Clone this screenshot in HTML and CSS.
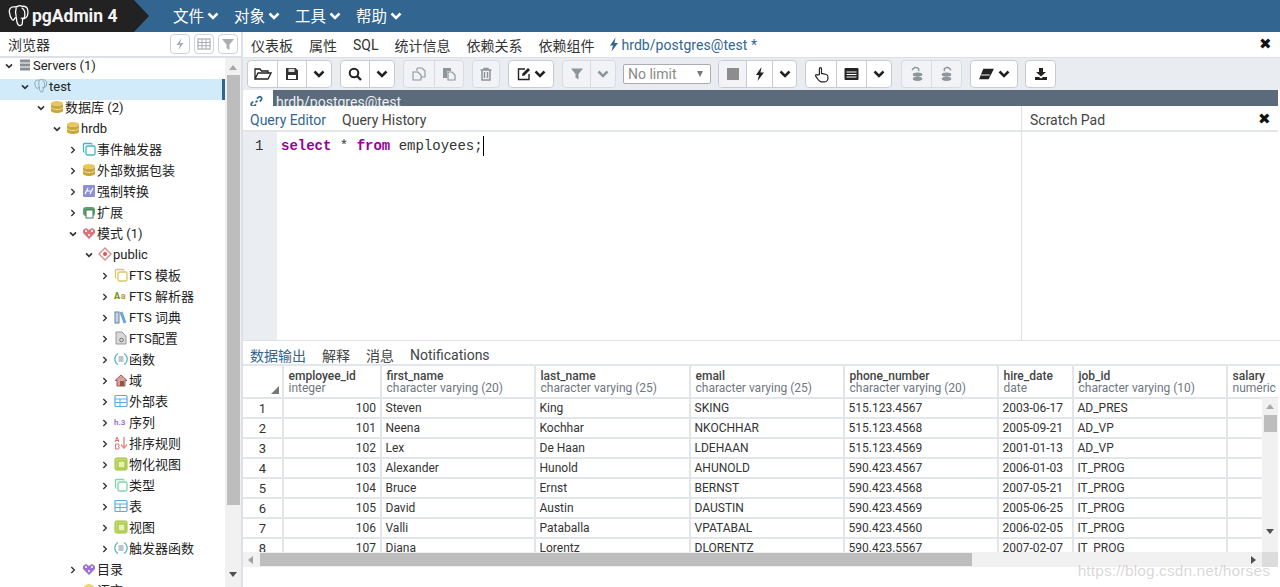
FILE: index.html
```html
<!DOCTYPE html>
<html lang="zh">
<head>
<meta charset="utf-8">
<title>pgAdmin 4</title>
<link rel="stylesheet" href="styles.css">
</head>
<body>
<svg class="sprite" aria-hidden="true">
  <symbol id="down" viewBox="0 0 12 8"><path d="M1.500 1.500 6 6l4.500-4.500" fill="none" stroke="currentColor" stroke-width="2.500"/></symbol>
  <symbol id="right" viewBox="0 0 8 12"><path d="M1.500 1.500 6 6l-4.500 4.500" fill="none" stroke="currentColor" stroke-width="2"/></symbol>
  <symbol id="pg" viewBox="0 0 24 24"><path d="M6 2C2.500 2 1 5 1.500 8c.4 3 1.500 6 3 8 1 1 2 .5 2.500-1 .5-1 1-1.500 2-1.500.3 3 .5 6 2 8 1.500 1.500 4 1 4.500-1 .3-2 .3-4 .5-5.500 2 0 4-1 5-3 .7-2 1-5 .5-7-.8-2.500-3-4-6-3.500-1.500-1-3.500-1-5 0C9.500 2.300 7.500 2 6 2Z M9 3c-1 3-1 7 0 10 M15 3c3 2 4 6 3 10-1 2-3 2-4 1" fill="none" stroke="currentColor" stroke-width="1.400"/></symbol>
  <symbol id="db" viewBox="0 0 14 14"><ellipse cx="7" cy="3.500" rx="6" ry="2.500" fill="#e8c65e"/><path d="M1 3.500v7c0 1.400 2.700 2.500 6 2.500s6-1.100 6-2.500v-7c0 1.400-2.700 2.500-6 2.500S1 4.900 1 3.500Z" fill="#c9a63c"/><path d="M1 7c0 1.400 2.700 2.500 6 2.500S13 8.400 13 7" fill="none" stroke="#f2e3a6" stroke-width="1"/></symbol>
  <symbol id="schema" viewBox="0 0 14 14"><path d="M7 13 1 7V4l3-2 3 2 3-2 3 2v3Z" fill="currentColor"/><path d="M3 5h2M9 5h2M6 9h2" stroke="#fff" stroke-width="1.500"/></symbol>
  <symbol id="stack" viewBox="0 0 14 14"><rect x="4" y="4" width="9" height="9" rx="1.500" fill="#fff" stroke="currentColor" stroke-width="1.300"/><path d="M10 2.500A1 1 0 0 0 9 1.500H2.500a1 1 0 0 0-1 1V9a1 1 0 0 0 1 1" fill="none" stroke="currentColor" stroke-width="1.300"/></symbol>
  <symbol id="func" viewBox="0 0 14 14"><path d="M4 1.500C1.500 3 .8 5 .8 7s.7 4 3.200 5.500M10 1.500c2.500 1.500 3.200 3.500 3.200 5.500s-.7 4-3.200 5.500" fill="none" stroke="currentColor" stroke-width="1.300"/><path d="M4.500 5h5M4.500 7h5M4.500 9h5" stroke="#7a8a9a" stroke-width="1"/></symbol>
  <symbol id="grid" viewBox="0 0 14 14"><rect x="1" y="1.500" width="12" height="11" rx="1" fill="#fff" stroke="currentColor" stroke-width="1.200"/><path d="M1 5h12M1 8.500h12M6 5v7.500" stroke="currentColor" stroke-width="1"/></symbol>
  <symbol id="view" viewBox="0 0 14 14"><rect x="1" y="1" width="12" height="12" rx="1.500" fill="#c3dc6a" stroke="#9cbd38"/><rect x="4" y="4" width="7" height="7" fill="#e5f0b5" stroke="#9cbd38"/></symbol>
</svg>

<header class="nav">
  <div class="brand">
    <svg class="brand-icon"><use href="#pg"/></svg>
    <span class="brand-text">pgAdmin 4</span>
  </div>
  <nav class="menu">
    <span class="menu-item">文件<svg class="menu-caret"><use href="#down"/></svg></span>
    <span class="menu-item">对象<svg class="menu-caret"><use href="#down"/></svg></span>
    <span class="menu-item">工具<svg class="menu-caret"><use href="#down"/></svg></span>
    <span class="menu-item">帮助<svg class="menu-caret"><use href="#down"/></svg></span>
  </nav>
</header>

<main class="main">
  <aside class="browser">
    <div class="browser-head">
      <span class="browser-title">浏览器</span>
      <div class="browser-tools">
        <span class="mini-btn"><svg viewBox="0 0 14 14" class="ic14"><path d="M8.500 1 3.500 8H7l-1.500 5 5-7H7Z" fill="#a8aeb5"/></svg></span>
        <span class="mini-btn"><svg viewBox="0 0 14 14" class="ic14"><rect x="1" y="2" width="12" height="10" fill="none" stroke="#a8aeb5" stroke-width="1.200"/><path d="M1 5.500h12M1 8.700h12M5 2v10M9 2v10" stroke="#a8aeb5"/></svg></span>
        <span class="mini-btn"><svg viewBox="0 0 14 14" class="ic14"><path d="M1 2h12L8.500 7.500V13l-3-2V7.500Z" fill="#a8aeb5"/></svg></span>
      </div>
    </div>
    <div class="tree-wrap">
      <div class="tree">
        <div class="row l0"><svg class="chev"><use href="#down"/></svg><svg viewBox="0 0 14 14" class="ico"><path d="M2 1.500h10v3H2zM2 5.500h10v3H2zM2 9.500h10v3H2z" fill="#8a8f96"/></svg><span>Servers (1)</span></div>
        <div class="row l1 selected"><svg class="chev"><use href="#down"/></svg><svg class="ico ico-pg"><use href="#pg"/></svg><span>test</span></div>
        <div class="row l2"><svg class="chev"><use href="#down"/></svg><svg class="ico"><use href="#db"/></svg><span>数据库 (2)</span></div>
        <div class="row l3"><svg class="chev"><use href="#down"/></svg><svg class="ico"><use href="#db"/></svg><span>hrdb</span></div>
        <div class="row l4"><svg class="chev"><use href="#right"/></svg><svg class="ico c-teal"><use href="#stack"/></svg><span>事件触发器</span></div>
        <div class="row l4"><svg class="chev"><use href="#right"/></svg><svg class="ico"><use href="#db"/></svg><span>外部数据包装</span></div>
        <div class="row l4"><svg class="chev"><use href="#right"/></svg><svg viewBox="0 0 14 14" class="ico"><rect x="1" y="1" width="12" height="12" rx="1" fill="#8f8fd6"/><path d="M3 10 6 4M8 10l3-6M5 7h5" stroke="#fff" stroke-width="1.200"/></svg><span>强制转换</span></div>
        <div class="row l4"><svg class="chev"><use href="#right"/></svg><svg viewBox="0 0 14 14" class="ico"><rect x="1" y="2" width="12" height="9" rx="3" fill="#5f9e6e"/><rect x="4" y="5" width="7" height="8" fill="#fff" stroke="#3f7f50"/></svg><span>扩展</span></div>
        <div class="row l4"><svg class="chev"><use href="#down"/></svg><svg class="ico c-red"><use href="#schema"/></svg><span>模式 (1)</span></div>
        <div class="row l5"><svg class="chev"><use href="#down"/></svg><svg viewBox="0 0 14 14" class="ico"><path d="M7 1l6 6-6 6-6-6Z" fill="#fff" stroke="#d98a8a" stroke-width="1.300"/><circle cx="7" cy="7" r="2" fill="#d9534f"/></svg><span>public</span></div>
        <div class="row l6"><svg class="chev"><use href="#right"/></svg><svg class="ico c-yellow"><use href="#stack"/></svg><span>FTS 模板</span></div>
        <div class="row l6"><svg class="chev"><use href="#right"/></svg><span class="aa"><b>A</b><i>a</i></span><span>FTS 解析器</span></div>
        <div class="row l6"><svg class="chev"><use href="#right"/></svg><svg viewBox="0 0 14 14" class="ico"><rect x="1" y="2" width="4" height="11" fill="#c5d4e4" stroke="#6b7f94"/><path d="M7 2l4 11" stroke="#6aa6d8" stroke-width="3"/></svg><span>FTS 词典</span></div>
        <div class="row l6"><svg class="chev"><use href="#right"/></svg><svg viewBox="0 0 14 14" class="ico"><path d="M2 1h6l4 4v8H2Z" fill="#d8d8d8" stroke="#999"/><circle cx="7.500" cy="9" r="1.800" fill="none" stroke="#777"/></svg><span>FTS配置</span></div>
        <div class="row l6"><svg class="chev"><use href="#right"/></svg><svg class="ico c-cyan"><use href="#func"/></svg><span>函数</span></div>
        <div class="row l6"><svg class="chev"><use href="#right"/></svg><svg viewBox="0 0 14 14" class="ico"><path d="M7 2 1 7.500h2V13h8V7.500h2Z" fill="#d9a0a0" stroke="#a05a5a"/><rect x="6" y="8" width="4" height="5" fill="#8a5a3a"/></svg><span>域</span></div>
        <div class="row l6"><svg class="chev"><use href="#right"/></svg><svg class="ico c-blue"><use href="#grid"/></svg><span>外部表</span></div>
        <div class="row l6"><svg class="chev"><use href="#right"/></svg><span class="seq">h.3</span><span>序列</span></div>
        <div class="row l6"><svg class="chev"><use href="#right"/></svg><svg viewBox="0 0 14 14" class="ico"><path d="M3 1 1 6M3 1l2 5M2 4.500h2M1.500 8h2.500a1.200 1.200 0 0 1 0 2.500 1.200 1.200 0 0 1 0 2.500H1.500Z" fill="none" stroke="#e26f6f"/><path d="M10 1v11M7 8.500l3 3.500 3-3.500" fill="none" stroke="#e89090" stroke-width="1.500"/></svg><span>排序规则</span></div>
        <div class="row l6"><svg class="chev"><use href="#right"/></svg><svg class="ico"><use href="#view"/></svg><span>物化视图</span></div>
        <div class="row l6"><svg class="chev"><use href="#right"/></svg><svg class="ico c-mint"><use href="#stack"/></svg><span>类型</span></div>
        <div class="row l6"><svg class="chev"><use href="#right"/></svg><svg class="ico c-blue"><use href="#grid"/></svg><span>表</span></div>
        <div class="row l6"><svg class="chev"><use href="#right"/></svg><svg class="ico"><use href="#view"/></svg><span>视图</span></div>
        <div class="row l6"><svg class="chev"><use href="#right"/></svg><svg class="ico c-cyan"><use href="#func"/></svg><span>触发器函数</span></div>
        <div class="row l4"><svg class="chev"><use href="#right"/></svg><svg class="ico c-purple"><use href="#schema"/></svg><span>目录</span></div>
        <div class="row l4"><svg class="chev"><use href="#right"/></svg><svg viewBox="0 0 14 14" class="ico"><circle cx="7" cy="7" r="6" fill="#f0d860"/></svg><span>语言</span></div>
      </div>
      <div class="tree-scroll">
        <span class="arr-up"></span>
        <span class="tree-thumb"></span>
        <span class="arr-down"></span>
      </div>
    </div>
  </aside>

  <section class="work">
    <div class="tabs">
      <span class="tab">仪表板</span>
      <span class="tab">属性</span>
      <span class="tab">SQL</span>
      <span class="tab">统计信息</span>
      <span class="tab">依赖关系</span>
      <span class="tab">依赖组件</span>
      <span class="tab tab-active"><svg viewBox="0 0 10 14" class="bolt"><path d="M6.500 0 1 8h3l-1.500 6L9 5.500H5.500Z" fill="#326690"/></svg>hrdb/postgres@test *</span>
      <span class="x x-tabs">✖</span>
    </div>

    <div class="toolbar">
      <div class="group">
        <span class="btn w29"><svg viewBox="0 0 18 14" class="ic18"><path d="M1 12V2h5l1.500 2H14v2M1 12l3-6h13l-3 6Z" fill="none" stroke="#222" stroke-width="1.300"/></svg></span>
        <span class="btn w29"><svg viewBox="0 0 14 14" class="ic14"><path d="M1 1h9.500L13 3.500V13H1Z" fill="#333"/><rect x="3.500" y="1.800" width="6" height="3.200" fill="#ddd"/><rect x="3" y="8" width="8" height="4" fill="#fff"/></svg></span>
        <span class="btn w25"><svg class="caret"><use href="#down"/></svg></span>
      </div>
      <div class="group">
        <span class="btn w28"><svg viewBox="0 0 14 14" class="ic14"><circle cx="6" cy="6" r="4.300" fill="none" stroke="#222" stroke-width="2"/><path d="m9 9 4 4" stroke="#222" stroke-width="2.400"/></svg></span>
        <span class="btn w25"><svg class="caret"><use href="#down"/></svg></span>
      </div>
      <div class="group off">
        <span class="btn w30"><svg viewBox="0 0 14 14" class="ic14"><path d="M5 1h5l3 3v6H9M5 1v3M1 5h5l3 3v5H1Z" fill="none" stroke="#8d959d" stroke-width="1.100"/></svg></span>
        <span class="btn w29"><svg viewBox="0 0 14 14" class="ic14"><path d="M1 1h8v3H5v7H1Z" fill="#8d959d"/><path d="M6 5h4l3 3v5H6Z" fill="none" stroke="#8d959d" stroke-width="1.200"/></svg></span>
      </div>
      <div class="group off">
        <span class="btn w26"><svg viewBox="0 0 14 14" class="ic14"><path d="M1.500 3h11M5 3V1.500h4V3M3 3v10h8V3M5.500 5v6M8.500 5v6" fill="none" stroke="#8d959d" stroke-width="1.500"/></svg></span>
      </div>
      <div class="group">
        <span class="btn w44"><svg viewBox="0 0 14 14" class="ic14"><path d="M12 7v5.500H1.500V2H8" fill="none" stroke="#222" stroke-width="1.400"/><path d="m5 9 .5-2.500L11 1l2 2-5.500 5.500Z" fill="#222"/></svg><svg class="caret"><use href="#down"/></svg></span>
      </div>
      <div class="group off">
        <span class="btn w27"><svg viewBox="0 0 14 14" class="ic14"><path d="M1 1.500h12L8.500 7v5.500l-3-2V7Z" fill="#8d959d"/></svg></span>
        <span class="btn w25"><svg class="caret"><use href="#down"/></svg></span>
      </div>
      <div class="limit"><span>No limit</span><span class="limit-arrow"></span></div>
      <div class="group">
        <span class="btn w27 dim"><span class="stop"></span></span>
        <span class="btn w26"><svg viewBox="0 0 10 14" class="bolt-b"><path d="M6.500 0 1 8h3l-1.500 6L9 5.500H5.500Z" fill="#222"/></svg></span>
        <span class="btn w24"><svg class="caret"><use href="#down"/></svg></span>
      </div>
      <div class="group">
        <span class="btn w30"><svg viewBox="0 0 14 16" class="ic-hand"><path d="M5 8V2.500a1 1 0 0 1 2 0V7l4.500 1c1 .3 1.500 1 1.500 2v2c0 1-1 3-3 3H7c-1.500 0-2-1-3-2L1.500 9.500c-.5-1 .7-1.800 1.500-1Z" fill="#fff" stroke="#222" stroke-width="1.100"/></svg></span>
        <span class="btn w30"><svg viewBox="0 0 16 14" class="ic16"><rect x="1" y="1" width="14" height="12" rx="1" fill="#222"/><path d="M3 5h10M3 7.500h10M3 10h10" stroke="#fff"/></svg></span>
        <span class="btn w25"><svg class="caret"><use href="#down"/></svg></span>
      </div>
      <div class="group off wide-gap">
        <span class="btn w29"><svg viewBox="0 0 14 16" class="ic-hand"><path d="M3 4a3.500 3.500 0 0 1 6-1.500V5" fill="none" stroke="#8d959d" stroke-width="1.400"/><ellipse cx="8" cy="8" rx="4.500" ry="2" fill="#8d959d"/><ellipse cx="8" cy="12" rx="4.500" ry="2" fill="#8d959d"/></svg></span>
        <span class="btn w30"><svg viewBox="0 0 14 16" class="ic-hand"><path d="M11 4a3.500 3.500 0 0 0-6-1.500V5" fill="none" stroke="#8d959d" stroke-width="1.400"/><ellipse cx="7" cy="8" rx="4.500" ry="2" fill="#8d959d"/><ellipse cx="7" cy="12" rx="4.500" ry="2" fill="#8d959d"/></svg></span>
      </div>
      <div class="group">
        <span class="btn w46"><svg viewBox="0 0 16 12" class="ic16"><path d="M5 1h10L10 11H1Z" fill="#222"/><path d="M3 7h8" stroke="#fff"/></svg><svg class="caret"><use href="#down"/></svg></span>
      </div>
      <div class="group narrow-gap">
        <span class="btn w29"><svg viewBox="0 0 14 14" class="ic14"><path d="M5 1h4v4h3L7 9.500 2 5h3Z" fill="#222"/><path d="M1 10h4l2 1.500 2-1.500h4v3H1Z" fill="#222"/></svg></span>
      </div>
    </div>

    <div class="docbar">
      <span class="doc-tab"><svg viewBox="0 0 14 14" class="ic12"><path d="M6 8 8 6M3.500 7 2 8.500a2 2 0 0 0 3 3L6.500 10M7.500 4 9 2.500a2 2 0 0 1 3 3L10.500 7" fill="none" stroke="#326690" stroke-width="1.800"/></svg></span>
      <span class="doc-title">hrdb/postgres@test</span>
    </div>

    <div class="editor-area">
      <div class="editor-pane">
        <div class="subtabs">
          <span class="subtab current">Query Editor</span>
          <span class="subtab">Query History</span>
        </div>
        <div class="code">
          <div class="gutter">1</div>
          <div class="line"><b class="kw">select</b> * <b class="kw">from</b> employees;<span class="cursor"></span></div>
        </div>
      </div>
      <div class="scratch">
        <div class="scratch-head"><span>Scratch Pad</span><span class="x">✖</span></div>
      </div>
    </div>

    <div class="results">
      <div class="restabs">
        <span class="current">数据输出</span>
        <span>解释</span>
        <span>消息</span>
        <span>Notifications</span>
      </div>
      <div class="grid-wrap">
        <div class="grid-clip">
          <table class="grid">
            <colgroup>
              <col class="c40"><col class="c98"><col class="c154"><col class="c155"><col class="c154"><col class="c154"><col class="c75"><col class="c154"><col class="c100">
            </colgroup>
            <thead>
              <tr>
                <th class="corner-cell"><span class="sort"></span></th>
                <th>employee_id<small>integer</small></th>
                <th>first_name<small>character varying (20)</small></th>
                <th>last_name<small>character varying (25)</small></th>
                <th>email<small>character varying (25)</small></th>
                <th>phone_number<small>character varying (20)</small></th>
                <th>hire_date<small>date</small></th>
                <th>job_id<small>character varying (10)</small></th>
                <th>salary<small>numeric (8,2)</small></th>
              </tr>
            </thead>
            <tbody>
              <tr><td class="n">1</td><td class="r">100</td><td>Steven</td><td>King</td><td>SKING</td><td>515.123.4567</td><td>2003-06-17</td><td>AD_PRES</td><td></td></tr>
              <tr><td class="n">2</td><td class="r">101</td><td>Neena</td><td>Kochhar</td><td>NKOCHHAR</td><td>515.123.4568</td><td>2005-09-21</td><td>AD_VP</td><td></td></tr>
              <tr><td class="n">3</td><td class="r">102</td><td>Lex</td><td>De Haan</td><td>LDEHAAN</td><td>515.123.4569</td><td>2001-01-13</td><td>AD_VP</td><td></td></tr>
              <tr><td class="n">4</td><td class="r">103</td><td>Alexander</td><td>Hunold</td><td>AHUNOLD</td><td>590.423.4567</td><td>2006-01-03</td><td>IT_PROG</td><td></td></tr>
              <tr><td class="n">5</td><td class="r">104</td><td>Bruce</td><td>Ernst</td><td>BERNST</td><td>590.423.4568</td><td>2007-05-21</td><td>IT_PROG</td><td></td></tr>
              <tr><td class="n">6</td><td class="r">105</td><td>David</td><td>Austin</td><td>DAUSTIN</td><td>590.423.4569</td><td>2005-06-25</td><td>IT_PROG</td><td></td></tr>
              <tr><td class="n">7</td><td class="r">106</td><td>Valli</td><td>Pataballa</td><td>VPATABAL</td><td>590.423.4560</td><td>2006-02-05</td><td>IT_PROG</td><td></td></tr>
              <tr><td class="n">8</td><td class="r">107</td><td>Diana</td><td>Lorentz</td><td>DLORENTZ</td><td>590.423.5567</td><td>2007-02-07</td><td>IT_PROG</td><td></td></tr>
            </tbody>
          </table>
          <div class="vscroll"><span class="arr-up small"></span><span class="v-thumb"></span><span class="arr-down small"></span></div>
        </div>
        <div class="hscroll">
          <span class="arr-left"></span>
          <span class="h-thumb"></span>
          <span class="arr-right"></span>
          <span class="h-corner"></span>
        </div>
      </div>
    </div>
  </section>
</main>
<div class="watermark">https://blog.csdn.net/horses</div>
</body>
</html>
```
FILE: styles.css
```css
* { box-sizing: border-box; }
html, body { margin: 0; height: 587px; overflow: hidden; }
body {
  font-family: Roboto, "Noto Sans CJK SC", sans-serif;
  font-size: 13px;
  color: #222;
  background: #fff;
}
.sprite { display: none; }

/* nav */
.nav { height: 32px; background: #326690; display: flex; color: #fff; }
.brand {
  width: 149px;
  background: #222;
  clip-path: polygon(0 0, 134px 0, 149px 16px, 134px 32px, 0 32px);
  display: flex;
  align-items: center;
  padding-left: 8px;
}
.brand-icon { width: 22px; height: 24px; color: #fff; flex: none; }
.brand-text { font-size: 17.500px; font-weight: 700; margin-left: 2px; color: #f4f4f4; }
.menu { display: flex; margin-left: 24px; align-items: center; gap: 11px; padding-bottom: 3px; }
.menu-item { display: flex; align-items: center; font-size: 15.500px; width: 50px; white-space: nowrap; }
.menu-caret { width: 12px; height: 8px; margin-left: 3px; margin-top: 2px; color: #fff; flex: none; }

/* layout */
.main { display: flex; height: 555px; }
.browser { width: 243px; flex: none; border-right: 2px solid #dde0e6; display: flex; flex-direction: column; }
.browser-head {
  height: 26px;
  border-bottom: 2px solid #dde0e6;
  display: flex;
  justify-content: space-between;
  align-items: center;
  padding: 0 3px 0 8px;
  flex: none;
}
.browser-title { font-size: 14px; color: #333; }
.browser-tools { display: flex; gap: 4px; }
.mini-btn {
  width: 20px; height: 20px;
  border: 1px solid #ccd3da;
  border-radius: 4px;
  display: flex; align-items: center; justify-content: center;
}
.ic14 { width: 14px; height: 14px; }
.ic18 { width: 18px; height: 14px; }
.ic16 { width: 17px; height: 14px; }
.ic12 { width: 13px; height: 13px; }
.ic-hand { width: 15px; height: 17px; }
.tree-wrap { flex: 1; display: flex; min-height: 0; }
.tree { width: 225px; overflow: hidden; flex: none; }
.row { height: 21px; display: flex; align-items: flex-start; font-size: 13px; line-height: 15px; white-space: nowrap; color: #222; }
.row.selected { background: #d2ebfa; border-right: 3px solid #326690; }
.l0 { padding-left: 0; }
.l1 { padding-left: 16px; }
.l2 { padding-left: 32px; }
.l3 { padding-left: 48px; }
.l4 { padding-left: 64px; }
.l5 { padding-left: 80px; }
.l6 { padding-left: 96px; }
.chev { width: 8px; height: 8px; margin: 4px 5px 0 5px; color: #333; flex: none; }
.ico { width: 14px; height: 14px; margin: 0 1px 0 0; flex: none; }
.ico-pg { color: #7b94b0; }
.c-teal { color: #45b5c4; }
.c-red { color: #d9747a; }
.c-yellow { color: #dcc75a; }
.c-cyan { color: #63bcc9; }
.c-blue { color: #5aace6; }
.c-mint { color: #7fd6ac; }
.c-purple { color: #9b72cf; }
.aa { width: 15px; flex: none; font-size: 9px; letter-spacing: .5px; color: #7d9a28; font-weight: 700; }
.aa i { font-style: normal; color: #b09a30; }
.seq { width: 15px; flex: none; font-size: 8px; font-weight: 700; color: #9b72cf; }
.tree-scroll { width: 16px; background: #f1f1f1; position: relative; flex: none; display: flex; flex-direction: column; align-items: center; }
.arr-up { width: 0; height: 0; border: 4px solid transparent; border-bottom: 5px solid #a8a8a8; border-top: 0; margin-top: 7px; flex: none; }
.tree-thumb { width: 13px; height: 430px; background: #bdbdbd; margin-top: 5px; margin-left: 1px; flex: none; }
.arr-down { width: 0; height: 0; border: 4px solid transparent; border-top: 5px solid #505050; border-bottom: 0; margin-top: 67px; flex: none; }

/* tabs */
.work { flex: 1; min-width: 0; display: flex; flex-direction: column; }
.tabs { height: 25px; display: flex; align-items: center; padding-left: 0; position: relative; flex: none; }
.tab { padding: 0 8px; font-size: 14px; color: #333; white-space: nowrap; }
.tab-active { font-size: 14px; color: #326690; padding-left: 7px; display: flex; align-items: center; letter-spacing: .05px; }
.bolt { width: 10px; height: 15px; margin-right: 2px; }
.x { font-size: 15px; color: #111; line-height: 1; }
.x-tabs { position: absolute; right: 8px; top: 5px; }

/* toolbar */
.toolbar {
  height: 33px;
  background: #e9edf2;
  border-top: 1px solid #dde0e6;
  padding: 2px 0 0 4px;
  display: flex;
  gap: 8px;
  flex: none;
}
.group { display: flex; height: 28px; border: 1px solid #c6ccd3; border-radius: 4px; background: #fff; overflow: hidden; flex: none; }
.group.off { background: #f1f3f6; border-color: #d8dce2; }
.wide-gap { margin-left: 1px; }
.narrow-gap { margin-left: -1px; }
.btn { height: 100%; display: flex; align-items: center; justify-content: center; gap: 3px; border-left: 1px solid #c6ccd3; flex: none; }
.btn:first-child { border-left: 0; }
.off .btn { border-left-color: #d8dce2; }
.off .caret { color: #8d959d; }
.dim { background: #f1f3f6; }
.w24 { width: 24px; } .w25 { width: 25px; } .w26 { width: 26px; } .w27 { width: 27px; } .w28 { width: 28px; }
.w29 { width: 29px; } .w30 { width: 30px; } .w44 { width: 44px; } .w46 { width: 46px; }
.caret { width: 12px; height: 8px; color: #222; }
.stop { width: 12px; height: 12px; background: #8d8d8d; display: block; }
.bolt-b { width: 10px; height: 14px; }
.limit {
  width: 88px; height: 20px; margin: 4px -1px 0 -1px;
  border: 1px solid #a8adb3; border-radius: 2px; background: #fff;
  color: #8a8a8a; font-size: 14px; display: flex; align-items: center; justify-content: space-between;
  padding: 0 7px 0 4px; flex: none;
}
.limit-arrow { width: 0; height: 0; border: 3.500px solid transparent; border-top: 6px solid #777; border-bottom: 0; }

/* doc */
.docbar { height: 16px; display: flex; flex: none; overflow: hidden; padding-right: 2px; }
.doc-tab { width: 30px; display: flex; align-items: center; justify-content: center; padding-top: 7px; padding-right: 3px; flex: none; }
.doc-title { flex: 1; background: #5b6b7c; color: #eef1f4; font-size: 14px; line-height: 24px; padding-left: 3px; }

/* editor */
.editor-area { height: 234px; display: flex; flex: none; }
.editor-pane { width: 779px; flex: none; display: flex; flex-direction: column; border-right: 1px solid #dde0e6; }
.subtabs { height: 26px; border-bottom: 2px solid #e2e5ea; display: flex; align-items: center; gap: 16px; padding: 4px 0 0 7px; flex: none; }
.subtab { font-size: 14px; color: #444; }
.current { color: #326690; }
.code { flex: 1; display: flex; }
.gutter { width: 34px; background: #eaedf2; font: 14px/28px "Liberation Mono", monospace; color: #333; padding-left: 12px; flex: none; }
.line { font: 14px/28px "Liberation Mono", monospace; padding-left: 4px; color: #333; display: flex; white-space: pre; }
.kw { color: #990099; font-weight: 700; }
.cursor { width: 1px; height: 20px; background: #000; margin-top: 4px; }
.scratch { flex: 1; }
.scratch-head { height: 26px; border-bottom: 2px solid #e2e5ea; display: flex; justify-content: space-between; align-items: center; padding: 3px 7px 0 8px; font-size: 14px; color: #444; margin-right: 2px; }

/* results */
.results { flex: 1; display: flex; flex-direction: column; min-height: 0; border-top: 1px solid #dde0e6; }
.restabs { height: 25px; flex: none; border-bottom: 2px solid #e2e5ea; display: flex; align-items: center; gap: 16px; padding: 5px 0 0 7px; font-size: 14px; color: #444; }
.restabs .current { color: #326690; }
.grid-wrap { height: 201px; margin-right: 2px; display: flex; flex-direction: column; flex: none; }
.grid-clip { height: 186px; overflow: hidden; position: relative; flex: none; }
.grid { table-layout: fixed; border-collapse: collapse; width: 1044px; }
.c40 { width: 40px; } .c98 { width: 98px; } .c154 { width: 154px; } .c155 { width: 155px; } .c75 { width: 75px; } .c100 { width: 100px; }
.grid th {
  height: 32px; text-align: left; font-weight: 500; font-size: 12px; line-height: 11.500px;
  color: #444; padding: 2px 0 0 4.500px; border-right: 2px solid #e2e5ea; border-bottom: 2px solid #e2e5ea;
  white-space: nowrap; overflow: hidden; position: relative;
}
.grid th small { display: block; font-size: 12px; font-weight: 400; color: #6f777f; }
.corner-cell { position: relative; }
.sort { position: absolute; right: 3px; bottom: 3px; width: 0; height: 0; border-left: 8px solid transparent; border-bottom: 8px solid #777; }
.grid td {
  height: 20px; font-size: 12px; color: #333; padding: 0 0 0 3.500px; border-right: 2px solid #e2e5ea; border-bottom: 2px solid #e2e5ea;
  white-space: nowrap; overflow: hidden;
}
.grid td.n { text-align: center; padding: 0; font-size: 13px; }
.grid td.r { text-align: right; padding: 0 4px 0 0; }
.vscroll {
  position: absolute; right: 0; top: 32px; bottom: 0; width: 16px; background: #f1f1f1;
  display: flex; flex-direction: column; align-items: center;
}
.arr-up.small { margin-top: 6px; }
.v-thumb { width: 13px; height: 17px; background: #bdbdbd; margin-top: 6px; flex: none; }
.arr-down.small { margin-top: 97px; }
.hscroll { height: 15px; background: #f1f1f1; display: flex; align-items: center; flex: none; position: relative; }
.arr-left { width: 0; height: 0; border: 4px solid transparent; border-right: 5px solid #a0a0a0; border-left: 0; margin-left: 5px; flex: none; }
.h-thumb { width: 712px; height: 13px; background: #bdbdbd; margin-left: 7px; flex: none; }
.arr-right { width: 0; height: 0; border: 4px solid transparent; border-left: 5px solid #505050; border-right: 0; margin-left: 279px; flex: none; }
.h-corner { width: 16px; height: 15px; background: #dcdcdc; margin-left: auto; flex: none; }

.watermark {
  position: absolute; right: 10px; bottom: 7px;
  font-family: "Liberation Sans", sans-serif; font-size: 15.500px; color: rgba(150,150,150,.38);
  letter-spacing: .1px;
}
```
